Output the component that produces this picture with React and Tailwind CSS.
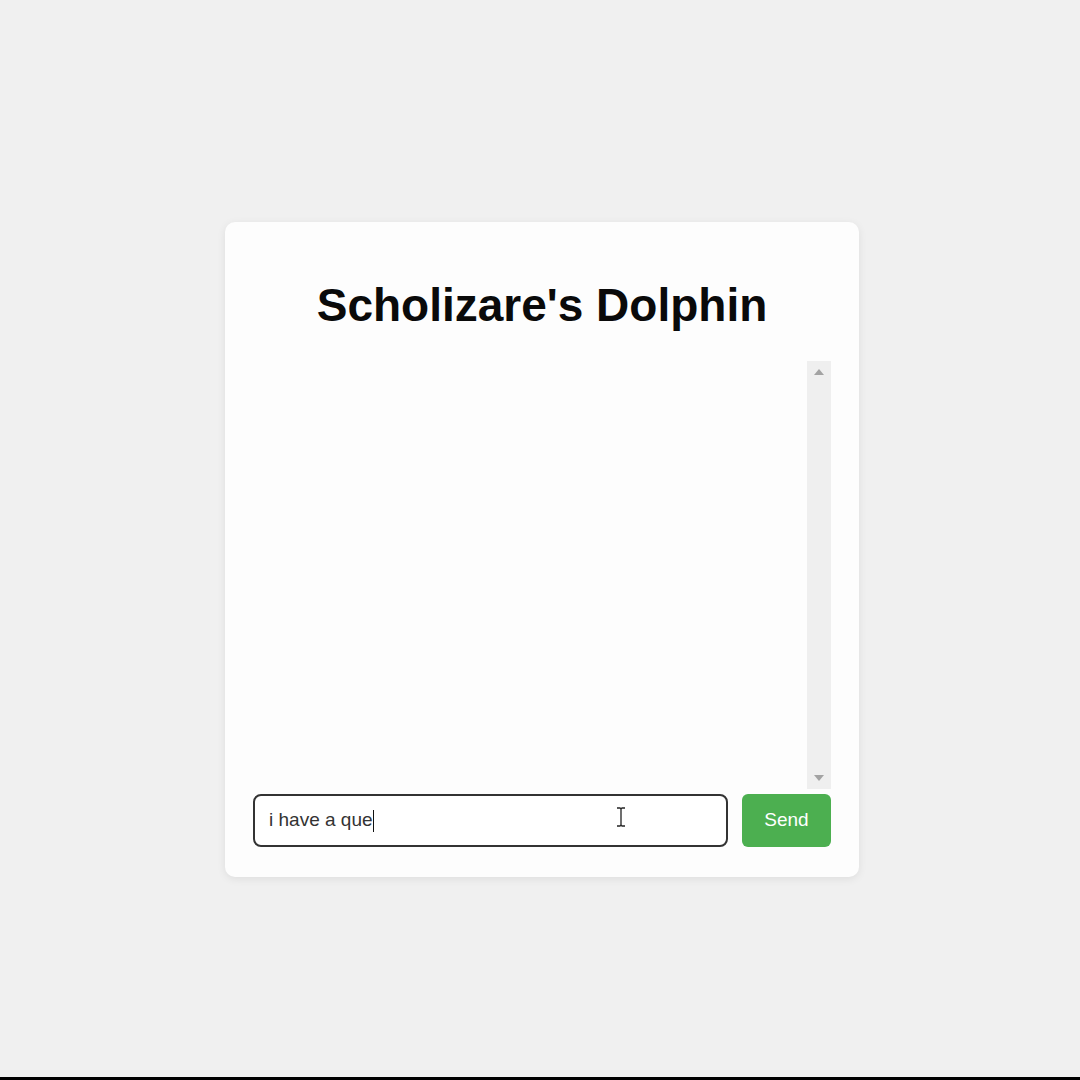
import React from 'react';

const ScrollTrack = () => (
  <div className="w-[24px] h-full bg-[#efefef] flex flex-col items-center justify-between py-[8px]">
    <svg width="10" height="6" viewBox="0 0 10 6">
      <path d="M5 0 L10 6 L0 6 Z" fill="#a3a3a3" />
    </svg>
    <svg width="10" height="6" viewBox="0 0 10 6">
      <path d="M0 0 L10 0 L5 6 Z" fill="#a3a3a3" />
    </svg>
  </div>
);

const App = () => {
  return (
    <div
      className="w-full h-[1080px] bg-[#f0f0f0] flex flex-col items-center border-b-[3px] border-black"
      style={{ fontFamily: '"Liberation Sans", Arial, sans-serif' }}
    >
      <div className="mt-[222px] ml-[4px] w-[634px] bg-[#fdfdfd] rounded-[10px] shadow-[0_2px_8px_rgba(0,0,0,0.08)] px-[28px] pt-[28px] pb-[30px] flex flex-col">
        {/* Title */}
        <h1 className="text-center text-[46px] leading-[52px] font-bold text-[#0a0a0a] mt-[29px] mb-[30px]">
          Scholizare's Dolphin
        </h1>

        {/* Chat area */}
        <div className="h-[428px] w-full flex">
          <div className="flex-1" />
          <ScrollTrack />
        </div>

        {/* Input row */}
        <div className="mt-[5px] flex gap-[14px] items-stretch">
          <div className="relative flex-1 h-[53px] border-2 border-[#333] rounded-[8px] bg-white flex items-center px-[14px]">
            <span className="text-[19px] text-[#333]">i have a que</span>
            <span className="w-px h-[22px] bg-[#111]" />
            <svg className="absolute left-[361px] top-[11px]" width="10" height="20" viewBox="0 0 10 20">
              <path d="M1 1 H4 Q5 1 5 3 V17 Q5 19 4 19 H1 M9 1 H6 Q5 1 5 3 M5 17 Q5 19 6 19 H9" fill="none" stroke="#222" strokeWidth="1.3" />
            </svg>
          </div>
          <button className="w-[89px] h-[53px] rounded-[6px] bg-[#4caf50] text-white text-[19px]">
            Send
          </button>
        </div>
      </div>
    </div>
  );
};

export default App;
